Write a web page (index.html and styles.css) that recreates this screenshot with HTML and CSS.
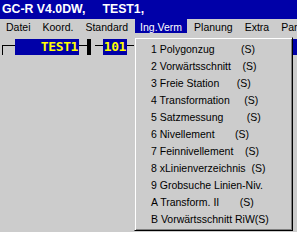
FILE: index.html
```html
<!DOCTYPE html>
<html>
<head>
<meta charset="utf-8">
<link rel="stylesheet" href="styles.css">
</head>
<body>
<div class="screen">
  <div class="titlebar">GC-R V4.0DW,     TEST1,</div>
  <div class="menubar">
    <span class="mi">Datei</span>
    <span class="mi">Koord.</span>
    <span class="mi">Standard</span>
    <span class="mi active">Ing.Verm</span>
    <span class="mi">Planung</span>
    <span class="mi">Extra</span>
    <span class="mi">Par</span>
  </div>
  <div class="fieldrow">
    <span class="corner"></span>
    <span class="field f-name">TEST1</span>
    <span class="link"></span>
    <span class="bar"></span>
    <span class="link gap"></span>
    <span class="field f-num">101</span>
    <span class="link"></span>
    <span class="field f-rest"></span>
  </div>
  <div class="dropdown">
    <div class="item">1 Polygonzug         (S)</div>
    <div class="item">2 Vorwärtsschnitt    (S)</div>
    <div class="item">3 Freie Station      (S)</div>
    <div class="item">4 Transformation     (S)</div>
    <div class="item">5 Satzmessung        (S)</div>
    <div class="item">6 Nivellement       (S)</div>
    <div class="item">7 Feinnivellement    (S)</div>
    <div class="item">8 xLinienverzeichnis  (S)</div>
    <div class="item">9 Grobsuche Linien-Niv.</div>
    <div class="item">A Transform. II       (S)</div>
    <div class="item">B Vorwärtsschnitt RiW(S)</div>
  </div>
</div>
</body>
</html>
```

FILE: styles.css
```css
html, body {
  margin: 0;
  padding: 0;
}
body {
  background: #cccccc;
  font-family: "Liberation Sans", Arial, sans-serif;
}
.screen {
  position: relative;
  width: 297px;
  height: 232px;
  overflow: hidden;
  background: #cccccc;
}
.titlebar {
  height: 19px;
  line-height: 19px;
  background: #0000a8;
  color: #ffffff;
  font-weight: bold;
  font-size: 12.3px;
  padding-left: 2px;
  white-space: pre;
}
.menubar {
  height: 18px;
  display: flex;
  gap: 2px;
  padding-left: 1px;
  font-size: 10.5px;
  color: #000;
}
.mi {
  height: 14px;
  box-sizing: border-box;
  padding: 2px 5px 0;
  line-height: 12px;
  white-space: nowrap;
}
.mi.active {
  background: #0000a8;
  color: #ffffff;
}
.fieldrow {
  display: flex;
  align-items: flex-start;
  margin-top: 2px;
  padding-left: 2px;
  height: 16px;
}
.corner {
  width: 13px;
  height: 10px;
  margin-top: 6px;
  border-top: 1px solid #000;
  border-left: 1px solid #000;
  box-sizing: border-box;
  flex: none;
}
.field {
  height: 16px;
  background: #0000a8;
  color: #ffff00;
  font-family: "DejaVu Sans Mono", monospace;
  font-weight: bold;
  font-size: 13px;
  letter-spacing: -0.4px;
  line-height: 16px;
  text-align: right;
  box-sizing: border-box;
  flex: none;
}
.f-name {
  width: 64px;
  padding-right: 1px;
}
.f-num {
  width: 24px;
  padding-right: 1px;
}
.f-rest {
  width: 200px;
}
.link {
  width: 8px;
  height: 1px;
  margin-top: 6px;
  background: #000;
  flex: none;
}
.link.gap {
  margin-left: 4px;
}
.bar {
  width: 4px;
  height: 16px;
  background: #000;
  flex: none;
}
.dropdown {
  position: absolute;
  left: 134px;
  top: 37px;
  width: 159px;
  height: 194px;
  box-sizing: border-box;
  background: #cccccc;
  border: 1px solid;
  border-color: #cccccc #000000 #000000 #cccccc;
  box-shadow: inset 1px 1px 0 #ffffff, inset -1px -1px 0 #808080;
  padding: 3px 0 1px 16px;
  font-size: 10.5px;
  color: #000;
}
.item {
  height: 17px;
  line-height: 17px;
  white-space: pre;
}
```
